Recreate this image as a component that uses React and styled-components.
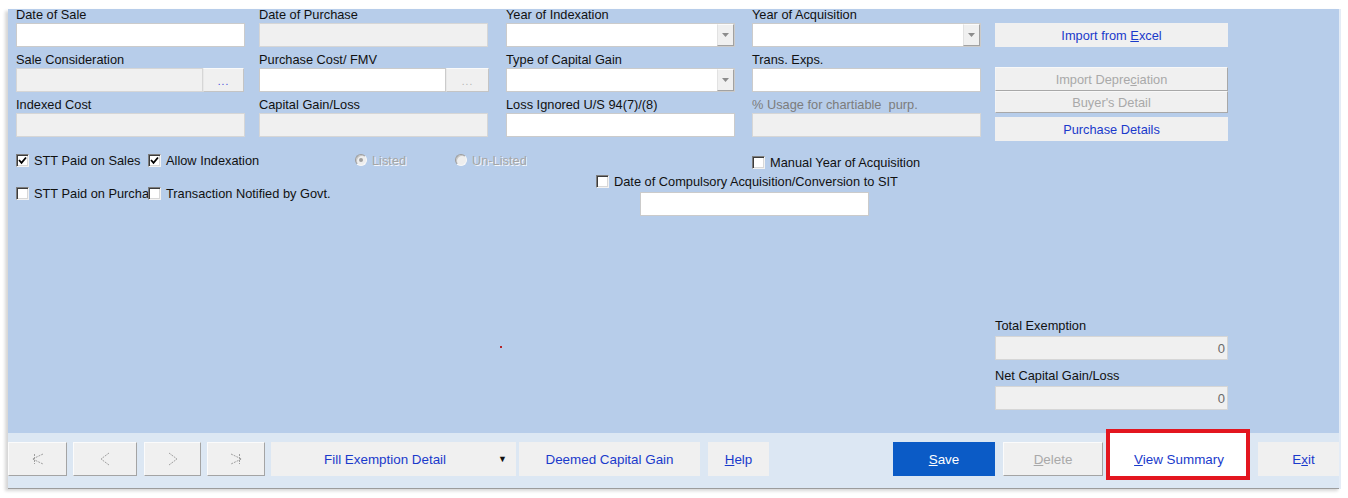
import React from "react";
import styled, { createGlobalStyle } from "styled-components";

const Global = createGlobalStyle`
  html, body { margin: 0; padding: 0; background: #fff; }
  body { font-family: "Liberation Sans", Arial, sans-serif; }
  * { box-sizing: border-box; }
`;

const Page = styled.div`
  width: 1348px;
  height: 498px;
  padding: 9px 0 0 8px;
  background: #fff;
  overflow: hidden;
`;

const Window = styled.div`
  width: 1333px;
  display: flex;
  flex-direction: column;
  border-right: 2px solid #e4ecf6;
  box-shadow: -3px 2px 3px rgba(0, 0, 0, 0.16);
`;

const Panel = styled.div`
  position: relative;
  height: 424px;
  background: #b7cdea;
  display: flex;
  padding-left: 8px;
  overflow: hidden;
`;

const LeftArea = styled.div`
  width: 979px;
  display: flex;
  flex-direction: column;
`;

const FieldsGrid = styled.div`
  margin-top: -1px;
  display: grid;
  grid-template-columns: 243px 247px 246px 243px;
  row-gap: 6px;
`;

const Field = styled.div`
  display: flex;
  flex-direction: column;
`;

const Label = styled.div`
  height: 15px;
  line-height: ${(p) => p.$lh || 13}px;
  font-size: 12.8px;
  white-space: pre;
  color: ${(p) => (p.$muted ? "#7c7c7c" : "#111")};
  margin-bottom: ${(p) => p.$mb || 0}px;
`;

const TextBox = styled.div`
  width: ${(p) => p.$w || 229}px;
  height: 24px;
  flex: none;
  background: ${(p) => (p.$disabled ? "#f0f0f0" : "#fff")};
  border: 1px solid ${(p) => (p.$disabled ? "#d6d6d6" : "#cbcbcb")};
  font-size: 13px;
  color: #6a6a6a;
  display: flex;
  align-items: center;
  justify-content: flex-end;
  padding-right: 2px;
`;

const BrowseRow = styled.div`
  display: flex;
  align-items: stretch;
  margin-left: ${(p) => p.$ml || 0}px;
  margin-top: ${(p) => p.$mt || 0}px;
`;

const DotsButton = styled.div`
  width: ${(p) => p.$w}px;
  height: 24px;
  background: #f0f0f0;
  border: 1px solid;
  border-color: #fafafa #c4c4c4 #c4c4c4 #e8e8e8;
  display: flex;
  align-items: flex-end;
  justify-content: center;
  padding-bottom: 4px;
  font-size: 10px;
  line-height: 10px;
  letter-spacing: 1px;
  color: ${(p) => (p.$active ? "#3a40d8" : "#b0b0b0")};
`;

const Combo = styled.div`
  width: 229px;
  height: 24px;
  background: #fff;
  border: 1px solid #cbcbcb;
  display: flex;
  justify-content: flex-end;
`;

const ComboArrow = styled.div`
  width: 17px;
  height: 22px;
  background: #f0f0f0;
  border: 1px solid;
  border-color: #fbfbfb #a2a2a2 #a2a2a2 #e2e2e2;
  display: flex;
  align-items: center;
  justify-content: center;
`;

const Options = styled.div`
  margin-top: 15px;
  display: flex;
`;

const LeftOptions = styled.div`
  width: 580px;
  display: flex;
  flex-direction: column;
  row-gap: 17px;
`;

const OptRow = styled.div`
  display: flex;
  height: 16px;
  align-items: center;
`;

const OptItem = styled.label`
  width: ${(p) => (p.$w ? `${p.$w}px` : "auto")};
  flex: none;
  display: flex;
  align-items: center;
  gap: 5px;
  height: 16px;
  overflow: hidden;
  white-space: nowrap;
  font-size: 12.8px;
  color: ${(p) => (p.$disabled ? "#a6a6a6" : "#111")};
  text-shadow: ${(p) => (p.$disabled ? "1px 1px 0 #f4f8fd" : "none")};
  margin-left: ${(p) => p.$ml || 0}px;
  margin-top: ${(p) => p.$mt || 0}px;
`;

const Check = styled.span`
  width: 13px;
  height: 13px;
  flex: none;
  background: #fff;
  border: 1px solid;
  border-color: #7e7e7e #f2f2f2 #f2f2f2 #7e7e7e;
  box-shadow: inset 1px 1px 0 #3c3c3c, inset -1px -1px 0 #d8d8d8;
  display: flex;
  align-items: center;
  justify-content: center;
`;

const Radio = styled.span`
  width: 12px;
  height: 12px;
  flex: none;
  border-radius: 50%;
  background: #eeeeee;
  border: 1px solid;
  border-color: #9c9c9c #f8f8f8 #f8f8f8 #9c9c9c;
  box-shadow: inset 1px 1px 0 #c6c6c6;
  display: flex;
  align-items: center;
  justify-content: center;
`;

const RadioDot = styled.span`
  width: 4px;
  height: 4px;
  border-radius: 50%;
  background: #a0a0a0;
`;

const RightOptions = styled.div`
  display: flex;
  flex-direction: column;
`;

const RightColumn = styled.div`
  width: 233px;
  display: flex;
  flex-direction: column;
  padding: 14px 0 23px;
`;

const SideButton = styled.div`
  height: ${(p) => p.$h || 24}px;
  margin-top: ${(p) => p.$mt || 0}px;
  background: #f0f0f0;
  border: 1px solid;
  border-color: ${(p) =>
    p.$raised ? "#f8f8f8 #a8a8a8 #a8a8a8 #f4f4f4" : "#f0f0f0"};
  display: flex;
  align-items: center;
  justify-content: center;
  font-size: 12.8px;
  color: ${(p) => (p.$disabled ? "#a9a9a9" : "#1a3acb")};
  white-space: nowrap;
`;

const Totals = styled.div`
  margin-top: auto;
  display: flex;
  flex-direction: column;
`;

const TotalGap = styled.div`
  height: 7px;
`;

const RedDot = styled.span`
  position: absolute;
  left: 492px;
  top: 337px;
  width: 2px;
  height: 2px;
  background: #b3242a;
`;

const Toolbar = styled.div`
  height: 56px;
  background: #dce7f3;
  border-bottom: 1px solid #9c9c9c;
  display: flex;
  align-items: flex-start;
  padding-top: 9px;
`;

const TBtn = styled.div`
  width: ${(p) => p.$w}px;
  height: 34px;
  flex: none;
  margin-left: ${(p) => p.$ml || 0}px;
  padding-left: ${(p) => p.$pl || 0}px;
  background: #f0f0f0;
  border: 1px solid;
  border-color: ${(p) =>
    p.$raised ? "#fbfbfb #a4a4a4 #a4a4a4 #fbfbfb" : "#f0f0f0"};
  display: flex;
  align-items: center;
  justify-content: center;
  font-size: 13.4px;
  white-space: nowrap;
  color: ${(p) => (p.$disabled ? "#a9a9a9" : "#1a3acb")};
`;

const SaveBtn = styled(TBtn)`
  background: #0b5bc6;
  border-color: #0b5bc6;
  color: #fff;
`;

const DropBtn = styled(TBtn)`
  justify-content: flex-start;
`;

const DropText = styled.span`
  flex: 1;
  text-align: center;
`;

const DropArrow = styled.span`
  font-size: 9px;
  color: #111;
  padding-right: 8px;
`;

const HighlightBtn = styled.div`
  position: relative;
  z-index: 1;
  width: 144px;
  height: 51px;
  flex: none;
  margin-left: 3px;
  margin-top: -13px;
  background: #fff;
  border: 4px solid #e3161f;
  display: flex;
  align-items: flex-end;
  justify-content: center;
  padding-bottom: 9px;
  padding-left: 2px;
  font-size: 13.4px;
  color: #1a3acb;
  white-space: nowrap;
`;

const CheckMark = () => (
  <svg width="9" height="9" viewBox="0 0 9 9">
    <polyline points="1,4 3.5,6.8 8,1.5" fill="none" stroke="#000" strokeWidth="1.8" />
  </svg>
);

const ArrowDown = () => (
  <svg width="7" height="4" viewBox="0 0 7 4">
    <polygon points="0,0 7,0 3.5,4" fill="#8c8c8c" />
  </svg>
);

const NavIcon = ({ kind }) => {
  const s = { fill: "none", stroke: "#a0a0a0", strokeWidth: 1, strokeDasharray: "2 1" };
  return (
    <svg width="14" height="14" viewBox="0 0 14 14">
      {kind === "first" && (
        <>
          <line x1="3.5" y1="2" x2="3.5" y2="12" {...s} />
          <polyline points="12,2 1.5,7 12,12" {...s} />
        </>
      )}
      {kind === "prev" && <polyline points="11,1 3,7 11,13" {...s} />}
      {kind === "next" && <polyline points="3,1 11,7 3,13" {...s} />}
      {kind === "last" && (
        <>
          <line x1="10.5" y1="2" x2="10.5" y2="12" {...s} />
          <polyline points="2,2 12.5,7 2,12" {...s} />
        </>
      )}
    </svg>
  );
};

const CheckOpt = ({ w, checked, children, ml, mt }) => (
  <OptItem $w={w} $ml={ml} $mt={mt}>
    <Check>{checked && <CheckMark />}</Check>
    <span>{children}</span>
  </OptItem>
);

const RadioOpt = ({ w, selected, children }) => (
  <OptItem $w={w} $disabled>
    <Radio>{selected && <RadioDot />}</Radio>
    <span>{children}</span>
  </OptItem>
);

const fields = [
  { label: "Date of Sale", kind: "text" },
  { label: "Date of Purchase", kind: "text", disabled: true },
  { label: "Year of Indexation", kind: "combo" },
  { label: "Year of Acquisition", kind: "combo" },
  { label: "Sale Consideration", kind: "browse", disabled: true, active: true, bw: 41 },
  { label: "Purchase Cost/ FMV", kind: "browse", bw: 43 },
  { label: "Type of Capital Gain", kind: "combo" },
  { label: "Trans. Exps.", kind: "text" },
  { label: "Indexed Cost", kind: "text", disabled: true },
  { label: "Capital Gain/Loss", kind: "text", disabled: true },
  { label: "Loss Ignored U/S 94(7)/(8)", kind: "text" },
  { label: "% Usage for chartiable  purp.", kind: "text", disabled: true, muted: true },
];

const renderControl = (f) => {
  if (f.kind === "combo")
    return (
      <Combo>
        <ComboArrow>
          <ArrowDown />
        </ComboArrow>
      </Combo>
    );
  if (f.kind === "browse")
    return (
      <BrowseRow>
        <TextBox $w={187} $disabled={f.disabled} />
        <DotsButton $w={f.bw} $active={f.active}>...</DotsButton>
      </BrowseRow>
    );
  return <TextBox $disabled={f.disabled} />;
};

export default function App() {
  return (
    <>
      <Global />
      <Page>
        <Window>
          <Panel>
            <LeftArea>
              <FieldsGrid>
                {fields.map((f) => (
                  <Field key={f.label}>
                    <Label $muted={f.muted}>{f.label}</Label>
                    {renderControl(f)}
                  </Field>
                ))}
              </FieldsGrid>
              <Options>
                <LeftOptions>
                  <OptRow>
                    <CheckOpt w={132} checked>STT Paid on Sales</CheckOpt>
                    <CheckOpt w={207} checked>Allow Indexation</CheckOpt>
                    <RadioOpt w={100} selected>Listed</RadioOpt>
                    <RadioOpt>Un-Listed</RadioOpt>
                  </OptRow>
                  <OptRow>
                    <CheckOpt w={132}>STT Paid on Purchase</CheckOpt>
                    <CheckOpt>Transaction Notified by Govt.</CheckOpt>
                  </OptRow>
                </LeftOptions>
                <RightOptions>
                  <CheckOpt ml={156} mt={2}>Manual Year of Acquisition</CheckOpt>
                  <CheckOpt mt={3}>Date of Compulsory Acquisition/Conversion to SIT</CheckOpt>
                  <BrowseRow $ml={44} $mt={3}>
                    <TextBox />
                  </BrowseRow>
                </RightOptions>
              </Options>
            </LeftArea>
            <RightColumn>
              <SideButton>
                <span>
                  Import from <u>E</u>xcel
                </span>
              </SideButton>
              <SideButton $mt={20} $raised $disabled>
                <span>
                  Import Depre<u>c</u>iation
                </span>
              </SideButton>
              <SideButton $h={22} $raised $disabled>
                Buyer's Detail
              </SideButton>
              <SideButton $mt={4}>Purchase Details</SideButton>
              <Totals>
                <Label $mb={4} $lh={17}>Total Exemption</Label>
                <TextBox $w={233} $disabled>0</TextBox>
                <TotalGap />
                <Label $mb={4} $lh={17}>Net Capital Gain/Loss</Label>
                <TextBox $w={233} $disabled>0</TextBox>
              </Totals>
            </RightColumn>
            <RedDot />
          </Panel>
          <Toolbar>
            <TBtn $w={59} $raised>
              <NavIcon kind="first" />
            </TBtn>
            <TBtn $w={64} $ml={6} $raised>
              <NavIcon kind="prev" />
            </TBtn>
            <TBtn $w={57} $ml={7} $raised>
              <NavIcon kind="next" />
            </TBtn>
            <TBtn $w={58} $ml={6} $raised>
              <NavIcon kind="last" />
            </TBtn>
            <DropBtn $w={245} $ml={6}>
              <DropText>Fill Exemption Detail</DropText>
              <DropArrow>▼</DropArrow>
            </DropBtn>
            <TBtn $w={181} $ml={3}>Deemed Capital Gain</TBtn>
            <TBtn $w={61} $ml={8}>
              <span>
                <u>H</u>elp
              </span>
            </TBtn>
            <SaveBtn $w={102} $ml={124}>
              <span>
                <u>S</u>ave
              </span>
            </SaveBtn>
            <TBtn $w={100} $ml={8} $raised $disabled>
              <span>
                <u>D</u>elete
              </span>
            </TBtn>
            <HighlightBtn>
              <span>
                <u>V</u>iew Summary
              </span>
            </HighlightBtn>
            <TBtn $w={81} $ml={8} $pl={10}>
              <span>
                E<u>x</u>it
              </span>
            </TBtn>
          </Toolbar>
        </Window>
      </Page>
    </>
  );
}
